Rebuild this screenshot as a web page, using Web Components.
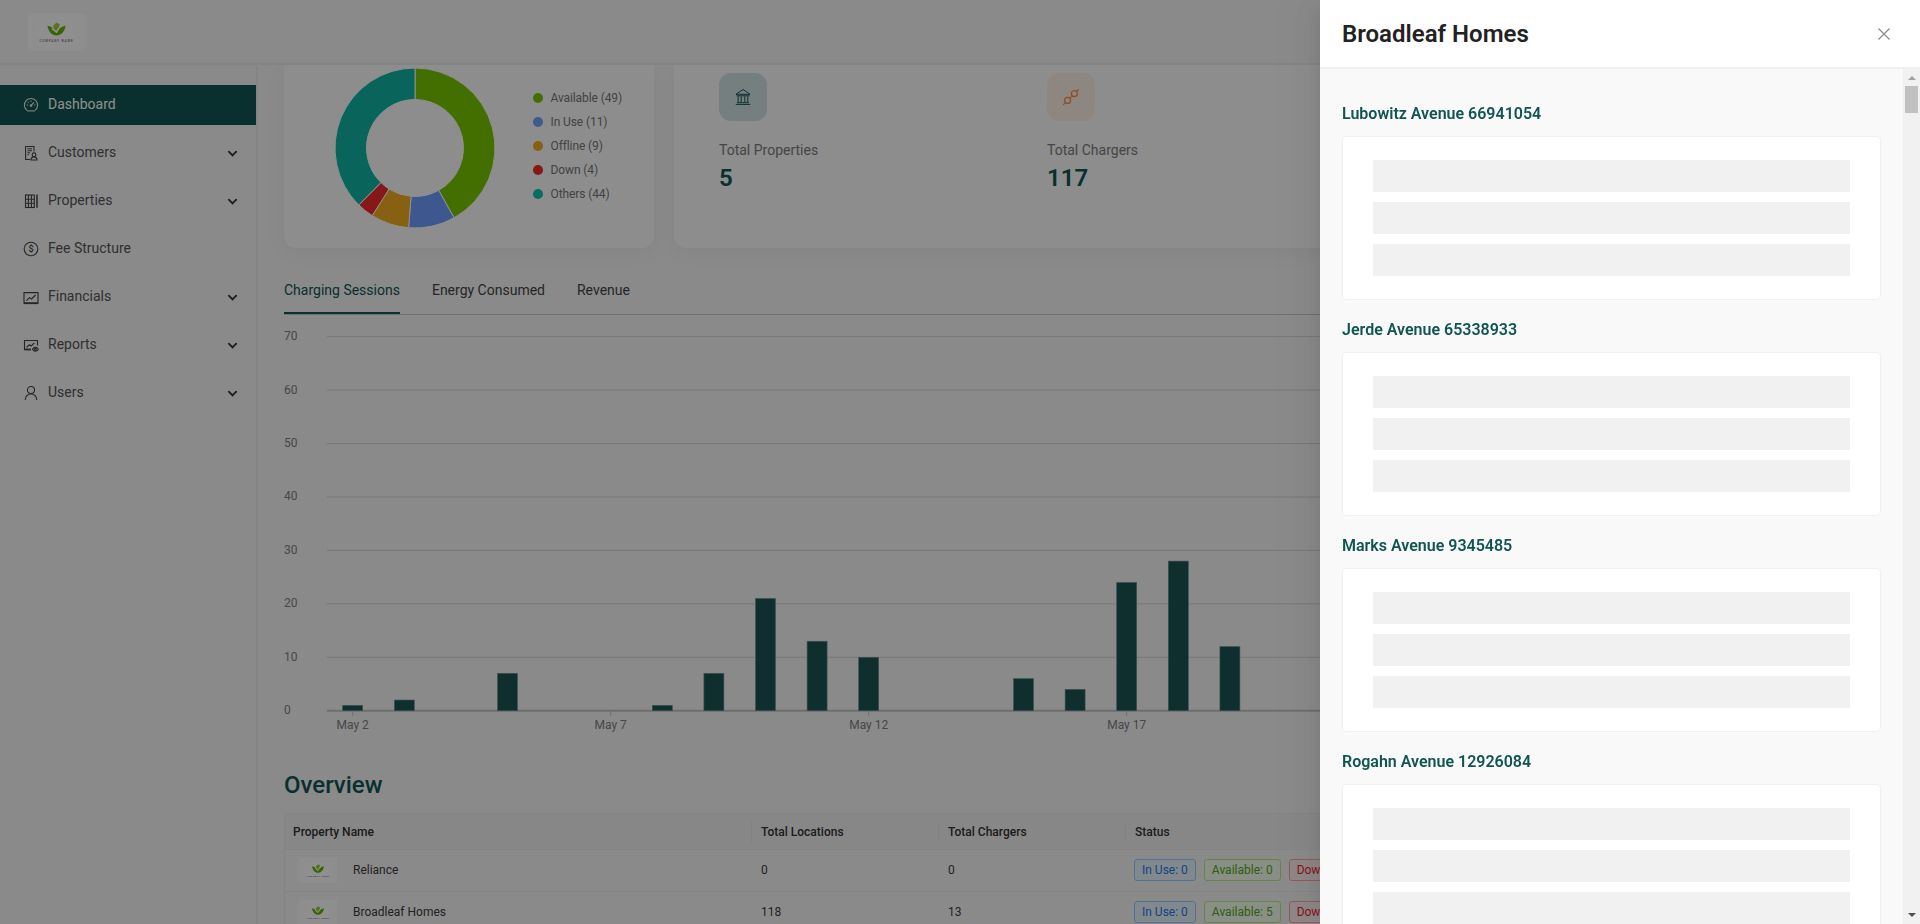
<!DOCTYPE html>
<html lang="en">
<head>
<meta charset="utf-8">
<title>Dashboard</title>
<style>
html,body{margin:0;height:100%;overflow:hidden;background:#f6f6f6;font-family:Roboto,"Liberation Sans",sans-serif;}
</style>
</head>
<body>
<app-shell>
  <app-header slot="header"></app-header>
  <app-sidebar slot="side">
    <nav-item icon="gauge" active>Dashboard</nav-item>
    <nav-item icon="customer" caret>Customers</nav-item>
    <nav-item icon="building" caret>Properties</nav-item>
    <nav-item icon="fee">Fee Structure</nav-item>
    <nav-item icon="chart" caret>Financials</nav-item>
    <nav-item icon="report" caret>Reports</nav-item>
    <nav-item icon="user" caret>Users</nav-item>
  </app-sidebar>
  <dash-main slot="main">
    <div class="top">
      <donut-card></donut-card>
      <stat-card>
        <stat-item kind="bank" label="Total Properties" value="5"></stat-item>
        <stat-item kind="plug" label="Total Chargers" value="117"></stat-item>
      </stat-card>
    </div>
    <tab-bar>
      <tab-item active>Charging Sessions</tab-item>
      <tab-item>Energy Consumed</tab-item>
      <tab-item>Revenue</tab-item>
    </tab-bar>
    <bar-chart></bar-chart>
    <section-title>Overview</section-title>
    <overview-table></overview-table>
  </dash-main>
</app-shell>
<side-drawer heading="Broadleaf Homes">
  <skeleton-section>Lubowitz Avenue 66941054</skeleton-section>
  <skeleton-section>Jerde Avenue 65338933</skeleton-section>
  <skeleton-section>Marks Avenue 9345485</skeleton-section>
  <skeleton-section>Rogahn Avenue 12926084</skeleton-section>
</side-drawer>
<script>
function define(name, render){
  customElements.define(name, class extends HTMLElement{
    constructor(){super();this.attachShadow({mode:'open'});}
    connectedCallback(){ this.shadowRoot.innerHTML = render(this); }
  });
}
const TEAL='#105552';
const PAGE='#f6f6f6';

const ICONS={
 gauge:'<path d="M4 13.4a6.6 6.600 0 1 1 8 0"/><path d="M4 13.900h8"/><path d="M8 8.500l2.800-3M3.700 8h1.200M11.200 8h1.200M8 3.500v1.200M4.900 4.800l.8.800"/><circle cx="8" cy="8.600" r=".8"/>',
 customer:'<path d="M11 6.500V1.500H2.600v13h4.600"/><path d="M4.500 3.800h4.500M4.500 5.800h4.500M4.500 7.800h2.500M4.500 9.800h1.500"/><circle cx="11" cy="9.800" r="1.900"/><path d="M8 15c0-2 1.200-3.100 3-3.100s3 1.100 3 3.100z"/>',
 building:'<rect x="2.500" y="2" width="8.800" height="12.500"/><path d="M5.400 2v12.500M8.400 2v12.500M2.500 6.200h8.800M2.500 10.300h8.800"/><path d="M14 1.600v13.200" stroke-width="1.500"/>',
 fee:'<circle cx="8" cy="8" r="6.800"/>',
 chart:'<path d="M1 3.600h14v10.600H1z"/><path d="M1 14.200h14" stroke-width="1.800"/><path d="M3.400 11.600l3.200-3 2 1.400 4-4"/>',
 report:'<path d="M8 12.500H1.500V3.500h13v5"/><path d="M1.500 12.500H8" stroke-width="1.800"/><path d="M3.600 10.400l2.800-2.600 1.800 1.200 3.200-3.200"/><circle cx="12.400" cy="12.200" r=".9"/><path d="M9.400 12.200c1.600-2.600 4.400-2.600 6 0-1.600 2.600-4.400 2.600-6 0z"/>',
 user:'<circle cx="8" cy="5" r="3.500"/><path d="M2.200 15c.4-3.800 2.600-6 5.800-6s5.400 2.200 5.800 6"/>'
};

define('app-shell',()=>`<style>
:host{display:flex;flex-direction:column;height:924px;overflow:hidden}
.row{display:flex;flex:1;min-height:0}
</style><slot name="header"></slot><div class="row"><slot name="side"></slot><slot name="main"></slot></div>`);

define('brand-logo',()=>`<style>
:host{display:block;flex:none;background:radial-gradient(ellipse at center,#fff 40%,#fcfcfc 100%)}
svg{display:block;width:100%;height:100%}
</style><svg viewBox="0 0 57 38" aria-label="Company logo">
<path d="M19.500 12.500C20 18.500 24 22.500 28.500 22.500S37 18.500 37.500 12.500C34 13.500 30.500 15.500 28.500 19 26.500 15.500 23 13.500 19.500 12.500Z" fill="#62b012"/>
<path d="M25 13l3.500-3.500 3.500 2-1.500 5-3 1.500z" fill="#a0cc2c"/>
<path d="M23.800 15.500l4.700 3.600L32.500 12.500" fill="none" stroke="#fff" stroke-width="1.500"/>
<text x="28.500" y="28.700" text-anchor="middle" font-family="Roboto,sans-serif" font-size="3" letter-spacing=".9" fill="#444">COMPANY NAME</text>
</svg>`);

define('app-header',()=>`<style>
:host{display:flex;align-items:flex-start;box-sizing:border-box;height:65px;padding:13px 0 0 28px;background:${PAGE};border-bottom:2px solid #ececec}
brand-logo{width:57px;height:38px}
</style><brand-logo></brand-logo>`);

define('app-sidebar',()=>`<style>
:host{display:block;box-sizing:content-box;flex:none;width:256px;padding-top:20px;border-right:2px solid #ebebeb;background:${PAGE}}
</style><slot></slot>`);

define('nav-item',(el)=>{
  const k=el.getAttribute('icon');
  const active=el.hasAttribute('active');
  const inner=ICONS[k]+(k==='fee'?'<text x="8" y="11.200" text-anchor="middle" font-family="Roboto,sans-serif" font-size="9" font-weight="500" stroke="none" fill="currentColor">$</text>':'');
  return `<style>
:host{display:flex;align-items:center;height:40px;margin-bottom:8px;padding:0 18px 0 23px;box-sizing:border-box;font-size:14px;line-height:22px;
  color:${active?'#fff':'#555'};background:${active?'#105552':'transparent'}}
svg.i{width:16px;height:16px;flex:none;margin-right:9px;fill:none;stroke:${active?'#e8e8e8':'#444'};stroke-width:1.100}
svg.i text{fill:#444}
span{flex:1;white-space:nowrap;position:relative;top:-1px}
svg.c{width:11px;height:11px;flex:none;fill:none;stroke:#333;stroke-width:2}
</style><svg class="i" viewBox="0 0 16 16">${inner}</svg><span><slot></slot></span>${el.hasAttribute('caret')?'<svg class="c" viewBox="0 0 12 12"><path d="M1.500 3.500L6 8l4.500-4.500"/></svg>':''}`;
});

define('dash-main',()=>`<style>
:host{display:block;flex:1;min-width:0;overflow:hidden;padding:0 28px 0 26px;box-sizing:border-box;background:${PAGE}}
::slotted(.top){display:flex;gap:20px;height:183px}
</style><slot></slot>`);

const SL=[[49,'#78c600'],[11,'#6f9cff'],[9,'#f0ac20'],[4,'#f02c2c'],[44,'#10b5a4']];
function arc(a0,a1,R,r,cx,cy){
  const p=(a,rad)=>[(cx+rad*Math.sin(a)).toFixed(2),(cy-rad*Math.cos(a)).toFixed(2)];
  const l=a1-a0>Math.PI?1:0;
  const A=p(a0,R),B=p(a1,R),C=p(a1,r),D=p(a0,r);
  return `M${A}A${R} ${R} 0 ${l} 1 ${B}L${C}A${r} ${r} 0 ${l} 0 ${D}Z`;
}
define('donut-card',()=>{
  let a=0,paths='';
  const LBL=['Available (49)','In Use (11)','Offline (9)','Down (4)','Others (44)'];
  const DOT=['#78c600','#739fff','#f0ac20','#f02c2c','#10c0ad'];
  SL.forEach(([v,c])=>{const b=a+v/117*Math.PI*2;paths+=`<path d="${arc(a,b,80,48.500,81,81)}" fill="${c}" stroke="#fff" stroke-width="1"/>`;a=b;});
  return `<style>
:host{display:flex;align-items:flex-start;box-sizing:border-box;flex:none;width:370px;height:183px;padding:2px 0 0 50px;background:#fbfbfb;border-radius:0 0 12px 12px;box-shadow:0 4px 20px rgba(0,0,0,.05)}
svg{width:162px;height:162px;flex:none;display:block}
ul{list-style:none;margin:19px 0 0 37px;padding:0;font-size:12px;line-height:24px;color:#777;white-space:nowrap;letter-spacing:-.1px}
li{display:flex;align-items:center;height:24px;gap:7.500px}
i{width:10px;height:10px;border-radius:50%;display:block}
</style><svg viewBox="0 0 162 162">${paths}</svg><ul>${LBL.map((t,i)=>`<li><i style="background:${DOT[i]}"></i>${t}</li>`).join('')}</ul>`;
});

define('stat-card',()=>`<style>
:host{display:flex;flex:1;box-sizing:border-box;height:183px;padding:8px 0 0 45px;background:#fbfbfb;border-radius:0 0 12px 12px;box-shadow:0 4px 20px rgba(0,0,0,.05)}
</style><slot></slot>`);

define('stat-item',(el)=>{
  const bank=el.getAttribute('kind')==='bank';
  const svg=bank
   ?`<svg viewBox="0 0 18 18" fill="none" stroke="${TEAL}" stroke-width="1"><path d="M2 6.300L9 1.500l7 4.800zM2.500 7.800h13M4.200 8.300v5.800M7.200 8.300v5.800M10.800 8.300v5.800M13.800 8.300v5.800M3 14.700h12M1.800 16.400h14.400"/></svg>`
   :`<svg viewBox="0 0 18 18" fill="none" stroke="#ff8c3c" stroke-width="1.200"><circle cx="5.600" cy="12.400" r="3"/><circle cx="12.400" cy="5.600" r="3"/><path d="M1.200 16.800l2.300-2.300M16.800 1.200l-2.300 2.300M7.600 8.900l1.500 1.500M8.900 7.600l1.500 1.500" /></svg>`;
  return `<style>
:host{display:block;width:328px;flex:none}
.ic{width:48px;height:48px;border-radius:12px;display:flex;align-items:center;justify-content:center;background:${bank?'#d3e3e3':'#fdefe4'}}
svg{width:18px;height:18px;display:block}
.l{margin-top:18px;font-size:14px;line-height:22px;color:#7c7c7c;font-weight:400}
.v{margin-top:1px;font-size:24px;line-height:32px;font-weight:600;color:${TEAL}}
</style><div class="ic">${svg}</div><div class="l">${el.getAttribute('label')}</div><div class="v">${el.getAttribute('value')}</div>`;
});

define('tab-bar',()=>`<style>
:host{display:flex;gap:32px;margin-top:20px;border-bottom:1px solid #c8c8c8}
</style><slot></slot>`);
define('tab-item',(el)=>`<style>
:host{display:block;box-sizing:border-box;padding:11px 0;height:46px;font-size:14px;line-height:22px;color:${el.hasAttribute('active')?TEAL:'#444'};border-bottom:2px solid ${el.hasAttribute('active')?TEAL:'transparent'}}
</style><slot></slot>`);

define('bar-chart',()=>{
  const top=21.7,step=53.43,x0=43,W=1608;
  const base=top+7*step, unit=step/10;
  const day=i=>68.7+(i-2)*51.6;
  let g='';
  for(let i=0;i<=7;i++){
    const y=top+i*step;
    g+=`<line x1="${x0}" x2="${W}" y1="${y}" y2="${y}" stroke="${i===7?'#c4c4c4':'#d4d4d4'}" stroke-width="${i===7?2:1}"/>`;
    g+=`<text x="0" y="${y+3.500}" font-size="12" fill="#808080">${(7-i)*10}</text>`;
  }
  const bars={2:1,3:2,5:7,8:1,9:7,10:21,11:13,12:10,15:6,16:4,17:24,18:28,19:12};
  for(const d in bars){
    const h=bars[d]*unit;
    g+=`<rect x="${day(+d)-10}" y="${base-h}" width="20" height="${h}" fill="#1c5454" stroke="#6d8f8f" stroke-width=".6"/>`;
  }
  [2,7,12,17].forEach(d=>{
    g+=`<line x1="${day(d)}" x2="${day(d)}" y1="${base}" y2="${base+5}" stroke="#c4c4c4"/>`;
    g+=`<text x="${day(d)}" y="${base+18}" text-anchor="middle" font-size="12" fill="#808080">May ${d}</text>`;
  });
  return `<style>:host{display:block;height:425px}svg{display:block;font-family:Roboto,sans-serif}</style><svg width="${W}" height="425" viewBox="0 0 ${W} 425">${g}</svg>`;
});

define('section-title',()=>`<style>
:host{display:block;margin-top:29px;font-size:24px;line-height:32px;font-weight:500;color:${TEAL}}
</style><slot></slot>`);

define('status-tag',(el)=>{
  const m={blue:['#e6f4ff','#91caff','#2a78e0'],green:['#f6ffed','#b7eb8f','#52a81a'],red:['#fff1f0','#ffa39e','#f5222d']}[el.getAttribute('tone')];
  return `<style>
:host{display:inline-block;box-sizing:border-box;height:22px;line-height:20px;padding:0 7px;font-size:12px;border:1px solid ${m[1]};border-radius:3px;background:${m[0]};color:${m[2]};white-space:nowrap;margin-right:8px}
</style><slot></slot>`;
});

define('overview-table',()=>{
  const rows=[['Reliance','0','0','0','0'],['Broadleaf Homes','118','13','0','5']];
  return `<style>
:host{display:block;margin-top:12px;width:1608px;box-sizing:border-box;border:1px solid #ececec;border-bottom:0;font-size:12px;color:#3c3c3c}
.r{display:grid;grid-template-columns:467px 187px 187px 1fr;align-items:center;border-bottom:1px solid #ececec;height:42px;box-sizing:border-box}
.h{height:36px;background:#f0f0f0;font-weight:500;color:#333}
.c{padding-left:9px;display:flex;align-items:center;height:100%;box-sizing:border-box;position:relative;white-space:nowrap;padding-bottom:1px}
.h .c{padding-bottom:0}
.h .c:first-child{padding-left:8px}
.h .c:not(:last-child)::after{content:"";position:absolute;right:0;top:8px;height:20px;width:1px;background:#e4e4e4}
.n{padding-left:14px;gap:16px}
brand-logo{width:38px;height:25px}
.s{padding-left:8px}
</style>
<div class="r h"><div class="c">Property Name</div><div class="c">Total Locations</div><div class="c">Total Chargers</div><div class="c">Status</div></div>
${rows.map(r=>`<div class="r"><div class="c n"><brand-logo></brand-logo>${r[0]}</div><div class="c">${r[1]}</div><div class="c">${r[2]}</div><div class="c s"><status-tag tone="blue">In Use: ${r[3]}</status-tag><status-tag tone="green">Available: ${r[4]}</status-tag><status-tag tone="red">Down: 0</status-tag></div></div>`).join('')}`;
});

define('side-drawer',(el)=>`<style>
:host{position:fixed;inset:0;display:block;z-index:10}
.mask{position:absolute;inset:0;background:rgba(0,0,0,.44)}
.panel{position:absolute;top:0;right:0;bottom:0;width:600px;display:flex;flex-direction:column;background:#f9f9f9;
 box-shadow:-6px 0 16px -8px rgba(0,0,0,.08),-9px 0 28px 0 rgba(0,0,0,.05),-12px 0 48px 16px rgba(0,0,0,.03)}
header{display:flex;align-items:center;justify-content:space-between;box-sizing:border-box;height:69px;padding:0 30px 0 22px;background:#fff;border-bottom:2px solid #f0f0f0;flex:none}
h1{margin:0;font-size:24px;line-height:32px;font-weight:600;color:#222}
.x{width:12px;height:12px;display:block;stroke:#8a8a8a;stroke-width:1.200;fill:none}
.body{flex:1;display:flex;min-height:0}
.content{flex:1;min-width:0;overflow:hidden;padding:33px 22px 0}
scroll-rail{flex:none}
</style><div class="mask"></div><div class="panel"><header><h1>${el.getAttribute('heading')}</h1><svg class="x" viewBox="0 0 12 12"><path d="M.500 .500l11 11M11.500 .500l-11 11"/></svg></header>
<div class="body"><div class="content"><slot></slot></div><scroll-rail></scroll-rail></div></div>`);

define('scroll-rail',()=>`<style>
:host{display:flex;flex-direction:column;align-items:center;justify-content:space-between;width:17px;background:#f1f1f1;box-sizing:border-box}
.top{display:flex;flex-direction:column;align-items:center}
.up{width:0;height:0;margin-top:7px;border:4px solid transparent;border-top:0;border-bottom:4px solid #a3a3a3}
.thumb{width:13px;height:27px;margin-top:6px;background:#c1c1c1}
.down{width:0;height:0;margin-bottom:7px;border:4px solid transparent;border-bottom:0;border-top:4px solid #505050}
</style><div class="top"><div class="up"></div><div class="thumb"></div></div><div class="down"></div>`);

define('skeleton-section',()=>`<style>
:host{display:block;margin-bottom:18px}
h2{margin:0 0 10px;font-size:16px;line-height:24px;font-weight:600;color:${TEAL}}
.card{box-sizing:border-box;height:164px;padding:23px 30px;background:#fff;border:1px solid #f0f0f0;border-radius:4px;display:flex;flex-direction:column;gap:10px}
.card div{height:32px;background:#f1f1f1;flex:none}
</style><h2><slot></slot></h2><div class="card"><div></div><div></div><div></div></div>`);
</script>
</body>
</html>
